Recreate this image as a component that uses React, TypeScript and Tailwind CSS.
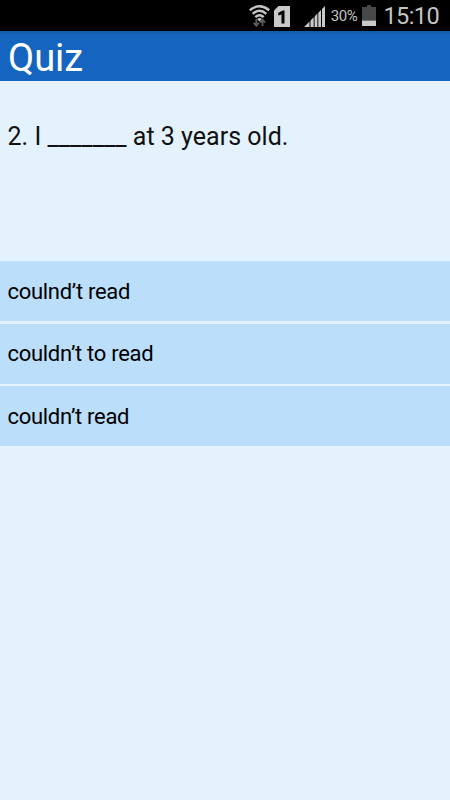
// Quiz Screen
// Shows one question with its possible answers

const ANSWERS = ['coulnd’t read', 'couldn’t to read', 'couldn’t read'];

function WifiIcon() {
  return (
    <svg width="21" height="22" viewBox="0 0 21 22" fill="none" stroke="#c4c4c4" strokeWidth="2.4">
      <path d="M0.800 5.200Q10.500 -2.600 20.200 5.200" />
      <path d="M3.700 8.800Q10.500 2.800 17.300 8.800" />
      <path d="M6.300 12.200Q10.500 8.200 14.700 12.200" />
      <path d="M8 14q2.500-2 5 0l-2.500 2.500z" fill="#c4c4c4" stroke="none" />
      <path d="M7.300 14v6.500M4.700 17.800l2.600 3 2.600-3" stroke="#5c5c5c" strokeWidth="1.800" />
      <path d="M13.500 21v-6M10.900 17.700l2.600-3 2.600 3" stroke="#5c5c5c" strokeWidth="1.800" />
    </svg>
  );
}

function StatusBar() {
  return (
    <div className="flex h-[31px] items-center justify-end bg-black pt-px pr-[11px] text-[#c4c4c4]">
      <WifiIcon />
      <svg className="ml-[4px]" width="16" height="21" viewBox="0 0 16 21">
        <path d="M4.500 0H16v21H0V4.500z" fill="#c9c9c9" />
        <path d="M10.500 4.500v13H7.500V8.500L4.300 9.400V6.800L8.900 4.500z" fill="#000" />
      </svg>
      <svg className="ml-[14px]" width="21" height="21" viewBox="0 0 21 21" fill="#c9c9c9">
        <path d="M0 21L5.500 15.500V21zM6.500 21v-6.500l3.200-3.200V21zM10.600 21V10.400l2.800-2.800V21zM14.300 21V6.700l2.700-2.700V21zM18 21V3L21 0v21z" />
      </svg>
      <span className="ml-[6px] text-[15px] tracking-[-0.4px]">30%</span>
      <svg className="mb-px ml-[5px]" width="14" height="21" viewBox="0 0 14 21">
        <path d="M5 0h4v2h5v13.500H0V2h5z" fill="#484848" />
        <path d="M0 15.500h14V21H0z" fill="#c9c9c9" />
      </svg>
      <span className="ml-[7px] text-[23.500px] leading-[30px] tracking-[-0.6px]">15:10</span>
    </div>
  );
}

export default function App() {
  return (
    <div className="h-[800px] w-[450px] overflow-hidden bg-[#e3f2fd] font-[Roboto,sans-serif] text-[#111]">
      <StatusBar />
      <header className="h-[50px] bg-linear-to-b from-[#155ba9] to-[#1565c0] to-[4px] px-2 text-[38px] leading-[54px] text-white">
        Quiz
      </header>
      <p className="h-[180px] pt-[39px] pl-[7.500px] text-[25px] leading-[34px] tracking-[0.02px]">
        2. I _______ at 3 years old.
      </p>
      <div className="flex flex-col gap-[2.500px]">
        {ANSWERS.map((answer) => (
          <button
            key={answer}
            className="block h-[60px] w-full bg-[#bbdefb] px-[7.500px] text-left text-[22px] tracking-[-0.300px] text-black"
          >
            {answer}
          </button>
        ))}
      </div>
    </div>
  );
}
